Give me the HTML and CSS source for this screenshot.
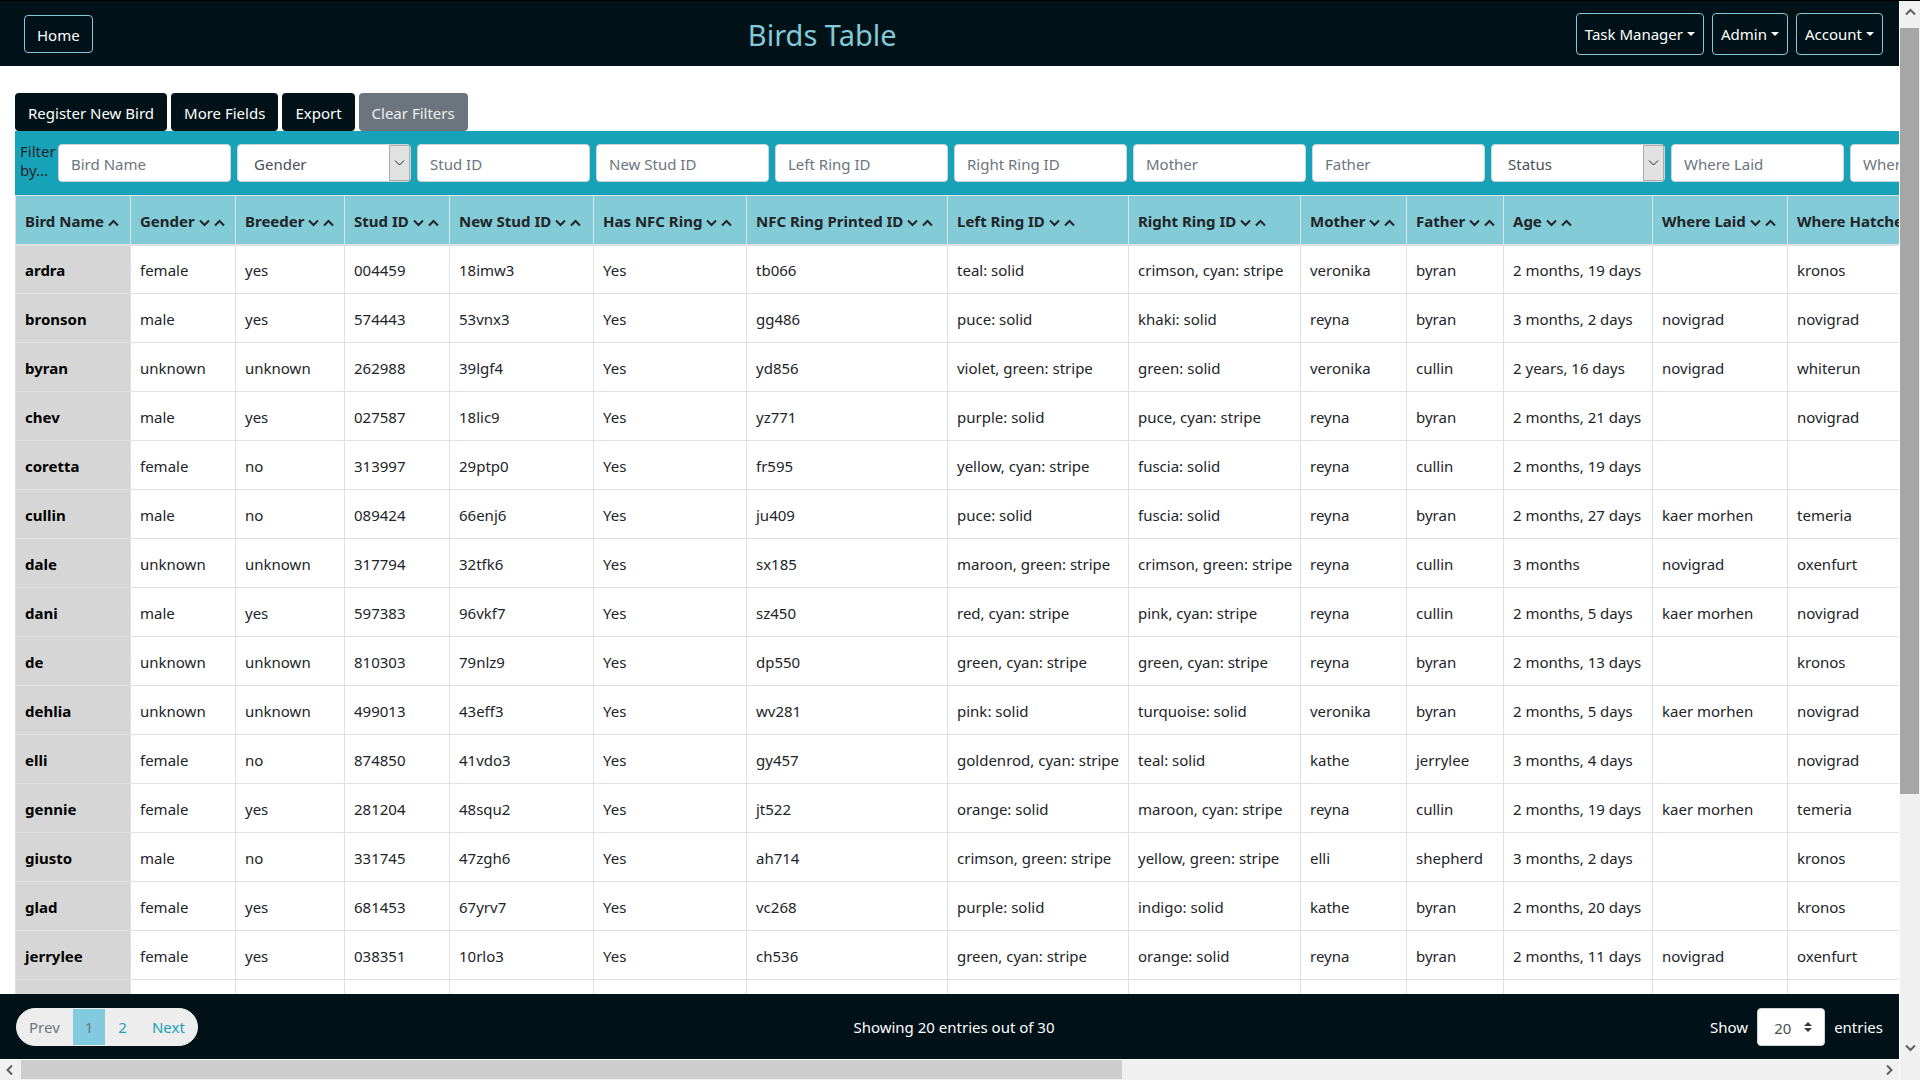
FILE: index.html
```html
<!DOCTYPE html>
<html lang="en">
<head>
<meta charset="utf-8">
<title>Birds Table</title>
<link rel="stylesheet" href="styles.css">
</head>
<body>
<svg class="defs" aria-hidden="true">
  <symbol id="down" viewBox="0 0 11 8"><path d="M1 1.5 5.5 6 10 1.5"/></symbol>
  <symbol id="up" viewBox="0 0 11 8"><path d="M1 6.5 5.5 2 10 6.5"/></symbol>
</svg>
<div class="app">
  <header class="navbar">
    <button type="button" class="btn btn-dark btn-outline">Home</button>
    <h1 class="title">Birds Table</h1>
    <nav class="menus">
      <button type="button" class="menu">Task Manager<span class="caret"></span></button>
      <button type="button" class="menu">Admin<span class="caret"></span></button>
      <button type="button" class="menu">Account<span class="caret"></span></button>
    </nav>
  </header>

  <main class="main">
    <div class="toolbar">
      <button type="button" class="btn btn-dark">Register New Bird</button>
      <button type="button" class="btn btn-dark">More Fields</button>
      <button type="button" class="btn btn-dark">Export</button>
      <button type="button" class="btn btn-gray">Clear Filters</button>
    </div>
    <form class="filters">
      <span class="filters-label">Filter by...</span>
      <input class="field" type="text" placeholder="Bird Name" aria-label="Bird Name">
      <span class="picker"><select class="field" aria-label="Gender"><option>Gender</option></select><span class="picker-btn"><svg><use href="#down"/></svg></span></span>
      <input class="field" type="text" placeholder="Stud ID" aria-label="Stud ID">
      <input class="field" type="text" placeholder="New Stud ID" aria-label="New Stud ID">
      <input class="field" type="text" placeholder="Left Ring ID" aria-label="Left Ring ID">
      <input class="field" type="text" placeholder="Right Ring ID" aria-label="Right Ring ID">
      <input class="field" type="text" placeholder="Mother" aria-label="Mother">
      <input class="field" type="text" placeholder="Father" aria-label="Father">
      <span class="picker"><select class="field" aria-label="Status"><option>Status</option></select><span class="picker-btn"><svg><use href="#down"/></svg></span></span>
      <input class="field" type="text" placeholder="Where Laid" aria-label="Where Laid">
      <input class="field" type="text" placeholder="Where Hatched" aria-label="Where Hatched">
    </form>
    <table class="birds">
      <colgroup>
        <col class="c-name"><col class="c-gender"><col class="c-breeder"><col class="c-stud"><col class="c-newstud"><col class="c-nfc"><col class="c-printed"><col class="c-left"><col class="c-right"><col class="c-mother"><col class="c-father"><col class="c-age"><col class="c-laid"><col class="c-hatched">
      </colgroup>
      <thead>
        <tr>
          <th scope="col">Bird Name<button type="button" class="sort" aria-label="Ascending"><svg><use href="#up"/></svg></button></th>
          <th scope="col">Gender<button type="button" class="sort" aria-label="Descending"><svg><use href="#down"/></svg></button><button type="button" class="sort" aria-label="Ascending"><svg><use href="#up"/></svg></button></th>
          <th scope="col">Breeder<button type="button" class="sort" aria-label="Descending"><svg><use href="#down"/></svg></button><button type="button" class="sort" aria-label="Ascending"><svg><use href="#up"/></svg></button></th>
          <th scope="col">Stud ID<button type="button" class="sort" aria-label="Descending"><svg><use href="#down"/></svg></button><button type="button" class="sort" aria-label="Ascending"><svg><use href="#up"/></svg></button></th>
          <th scope="col">New Stud ID<button type="button" class="sort" aria-label="Descending"><svg><use href="#down"/></svg></button><button type="button" class="sort" aria-label="Ascending"><svg><use href="#up"/></svg></button></th>
          <th scope="col">Has NFC Ring<button type="button" class="sort" aria-label="Descending"><svg><use href="#down"/></svg></button><button type="button" class="sort" aria-label="Ascending"><svg><use href="#up"/></svg></button></th>
          <th scope="col">NFC Ring Printed ID<button type="button" class="sort" aria-label="Descending"><svg><use href="#down"/></svg></button><button type="button" class="sort" aria-label="Ascending"><svg><use href="#up"/></svg></button></th>
          <th scope="col">Left Ring ID<button type="button" class="sort" aria-label="Descending"><svg><use href="#down"/></svg></button><button type="button" class="sort" aria-label="Ascending"><svg><use href="#up"/></svg></button></th>
          <th scope="col">Right Ring ID<button type="button" class="sort" aria-label="Descending"><svg><use href="#down"/></svg></button><button type="button" class="sort" aria-label="Ascending"><svg><use href="#up"/></svg></button></th>
          <th scope="col">Mother<button type="button" class="sort" aria-label="Descending"><svg><use href="#down"/></svg></button><button type="button" class="sort" aria-label="Ascending"><svg><use href="#up"/></svg></button></th>
          <th scope="col">Father<button type="button" class="sort" aria-label="Descending"><svg><use href="#down"/></svg></button><button type="button" class="sort" aria-label="Ascending"><svg><use href="#up"/></svg></button></th>
          <th scope="col">Age<button type="button" class="sort" aria-label="Descending"><svg><use href="#down"/></svg></button><button type="button" class="sort" aria-label="Ascending"><svg><use href="#up"/></svg></button></th>
          <th scope="col">Where Laid<button type="button" class="sort" aria-label="Descending"><svg><use href="#down"/></svg></button><button type="button" class="sort" aria-label="Ascending"><svg><use href="#up"/></svg></button></th>
          <th scope="col">Where Hatched<button type="button" class="sort" aria-label="Descending"><svg><use href="#down"/></svg></button><button type="button" class="sort" aria-label="Ascending"><svg><use href="#up"/></svg></button></th>
        </tr>
      </thead>
      <tbody>
        <tr><th scope="row">ardra</th><td>female</td><td>yes</td><td>004459</td><td>18imw3</td><td>Yes</td><td>tb066</td><td>teal: solid</td><td>crimson, cyan: stripe</td><td>veronika</td><td>byran</td><td>2 months, 19 days</td><td></td><td>kronos</td></tr>
        <tr><th scope="row">bronson</th><td>male</td><td>yes</td><td>574443</td><td>53vnx3</td><td>Yes</td><td>gg486</td><td>puce: solid</td><td>khaki: solid</td><td>reyna</td><td>byran</td><td>3 months, 2 days</td><td>novigrad</td><td>novigrad</td></tr>
        <tr><th scope="row">byran</th><td>unknown</td><td>unknown</td><td>262988</td><td>39lgf4</td><td>Yes</td><td>yd856</td><td>violet, green: stripe</td><td>green: solid</td><td>veronika</td><td>cullin</td><td>2 years, 16 days</td><td>novigrad</td><td>whiterun</td></tr>
        <tr><th scope="row">chev</th><td>male</td><td>yes</td><td>027587</td><td>18lic9</td><td>Yes</td><td>yz771</td><td>purple: solid</td><td>puce, cyan: stripe</td><td>reyna</td><td>byran</td><td>2 months, 21 days</td><td></td><td>novigrad</td></tr>
        <tr><th scope="row">coretta</th><td>female</td><td>no</td><td>313997</td><td>29ptp0</td><td>Yes</td><td>fr595</td><td>yellow, cyan: stripe</td><td>fuscia: solid</td><td>reyna</td><td>cullin</td><td>2 months, 19 days</td><td></td><td></td></tr>
        <tr><th scope="row">cullin</th><td>male</td><td>no</td><td>089424</td><td>66enj6</td><td>Yes</td><td>ju409</td><td>puce: solid</td><td>fuscia: solid</td><td>reyna</td><td>byran</td><td>2 months, 27 days</td><td>kaer morhen</td><td>temeria</td></tr>
        <tr><th scope="row">dale</th><td>unknown</td><td>unknown</td><td>317794</td><td>32tfk6</td><td>Yes</td><td>sx185</td><td>maroon, green: stripe</td><td>crimson, green: stripe</td><td>reyna</td><td>cullin</td><td>3 months</td><td>novigrad</td><td>oxenfurt</td></tr>
        <tr><th scope="row">dani</th><td>male</td><td>yes</td><td>597383</td><td>96vkf7</td><td>Yes</td><td>sz450</td><td>red, cyan: stripe</td><td>pink, cyan: stripe</td><td>reyna</td><td>cullin</td><td>2 months, 5 days</td><td>kaer morhen</td><td>novigrad</td></tr>
        <tr><th scope="row">de</th><td>unknown</td><td>unknown</td><td>810303</td><td>79nlz9</td><td>Yes</td><td>dp550</td><td>green, cyan: stripe</td><td>green, cyan: stripe</td><td>reyna</td><td>byran</td><td>2 months, 13 days</td><td></td><td>kronos</td></tr>
        <tr><th scope="row">dehlia</th><td>unknown</td><td>unknown</td><td>499013</td><td>43eff3</td><td>Yes</td><td>wv281</td><td>pink: solid</td><td>turquoise: solid</td><td>veronika</td><td>byran</td><td>2 months, 5 days</td><td>kaer morhen</td><td>novigrad</td></tr>
        <tr><th scope="row">elli</th><td>female</td><td>no</td><td>874850</td><td>41vdo3</td><td>Yes</td><td>gy457</td><td>goldenrod, cyan: stripe</td><td>teal: solid</td><td>kathe</td><td>jerrylee</td><td>3 months, 4 days</td><td></td><td>novigrad</td></tr>
        <tr><th scope="row">gennie</th><td>female</td><td>yes</td><td>281204</td><td>48squ2</td><td>Yes</td><td>jt522</td><td>orange: solid</td><td>maroon, cyan: stripe</td><td>reyna</td><td>cullin</td><td>2 months, 19 days</td><td>kaer morhen</td><td>temeria</td></tr>
        <tr><th scope="row">giusto</th><td>male</td><td>no</td><td>331745</td><td>47zgh6</td><td>Yes</td><td>ah714</td><td>crimson, green: stripe</td><td>yellow, green: stripe</td><td>elli</td><td>shepherd</td><td>3 months, 2 days</td><td></td><td>kronos</td></tr>
        <tr><th scope="row">glad</th><td>female</td><td>yes</td><td>681453</td><td>67yrv7</td><td>Yes</td><td>vc268</td><td>purple: solid</td><td>indigo: solid</td><td>kathe</td><td>byran</td><td>2 months, 20 days</td><td></td><td>kronos</td></tr>
        <tr><th scope="row">jerrylee</th><td>female</td><td>yes</td><td>038351</td><td>10rlo3</td><td>Yes</td><td>ch536</td><td>green, cyan: stripe</td><td>orange: solid</td><td>reyna</td><td>byran</td><td>2 months, 11 days</td><td>novigrad</td><td>oxenfurt</td></tr>
        <tr><th scope="row"></th><td></td><td></td><td></td><td></td><td></td><td></td><td></td><td></td><td></td><td></td><td></td><td></td><td></td></tr>
      </tbody>
    </table>
  </main>

  <footer class="footer">
    <nav class="pages" aria-label="Pages">
      <button type="button" class="page" disabled>Prev</button>
      <button type="button" class="page page-current" disabled>1</button>
      <a class="page" href="#2">2</a>
      <a class="page" href="#next">Next</a>
    </nav>
    <p class="summary">Showing 20 entries out of 30</p>
    <label class="length">Show
      <span class="length-box"><select class="length-select"><option>20</option></select><svg class="length-arrows" viewBox="0 0 8 10"><path d="M0 4 4 0 8 4ZM0 6 4 10 8 6Z"/></svg></span>
      entries</label>
  </footer>

  <div class="vbar">
    <svg><use href="#up"/></svg>
    <div class="vtrack"><div class="vthumb"></div></div>
    <svg><use href="#down"/></svg>
  </div>
  <div class="hbar">
    <svg class="turn"><use href="#up"/></svg>
    <div class="htrack"><div class="hthumb"></div></div>
    <svg class="turn"><use href="#down"/></svg>
  </div>
  <div class="corner"></div>
</div>
</body>
</html>
```
FILE: styles.css
```css
* { box-sizing: border-box; }

body {
  margin: 0;
  background: #fff;
  color: #212529;
  font: 15px/24px "Noto Sans", "Open Sans", sans-serif;
}

button, input, select { font: inherit; margin: 0; }

.defs { display: block; width: 0; height: 0; }
svg { fill: none; stroke: currentColor; stroke-width: 2; }

.app {
  display: grid;
  grid-template: auto minmax(0, 1fr) auto auto / minmax(0, 1fr) auto;
  grid-template-areas: "nav vbar" "main vbar" "foot vbar" "hbar corner";
  height: 100vh;
  border-top: 1px solid #000;
}

/* Top bar */
.navbar {
  grid-area: nav;
  display: flex;
  align-items: center;
  height: 65px;
  padding: 0 16px 0 24px;
  background: #001117;
}
.title {
  flex: 1;
  margin: 0 24px 0 0;
  padding-top: 2px;
  color: #82cad8;
  font-size: 29px;
  font-weight: 400;
  line-height: 36px;
  text-align: center;
}
.menus { display: flex; gap: 8px; }
.menu {
  display: flex;
  align-items: center;
  gap: 4px;
  height: 42px;
  padding: 0 8px;
  border: 1px solid #82cad8;
  border-radius: 4px;
  background: none;
  color: #fff;
}
.caret {
  border: 4px solid transparent;
  border-top-color: #fff;
  border-bottom: 0;
}

.btn {
  height: 38px;
  padding: 2px 12px 0;
  border: 1px solid transparent;
  border-radius: 4px;
  color: #fff;
}
.btn-dark { background: #001117; }
.btn-gray { background: #6c757d; color: #eceef0; }
.btn-outline { border-color: #82cad8; }

/* Toolbar and filters */
.main {
  grid-area: main;
  padding: 27px 0 0 15px;
  overflow: hidden;
}
.toolbar { display: flex; gap: 4px; }
.filters {
  display: flex;
  align-items: center;
  gap: 6px;
  height: 64px;
  padding-left: 5px;
  background: #18a2b8;
  overflow: hidden;
}
.filters-label { flex: none; width: 32px; padding-bottom: 5px; line-height: 19px; }
.field {
  flex: none;
  width: 173px;
  height: 38px;
  padding: 2px 12px 0;
  border: 1px solid #ced4da;
  border-radius: 4px;
  background: #fff;
  color: #495057;
}
.field::placeholder { color: #6c757d; opacity: 1; }
.picker { position: relative; flex: none; }
.picker .field { display: block; width: 174px; padding: 2px 16px 0; appearance: none; }
.picker-btn {
  position: absolute;
  top: 1px;
  right: 1px;
  display: grid;
  place-items: center;
  width: 21px;
  height: 36px;
  border: 1px solid #adadad;
  background: #e1e1e1;
  pointer-events: none;
}
.picker-btn svg { width: 11px; height: 8px; stroke-width: 1; }

/* Birds table */
.birds { width: 1973px; table-layout: fixed; border-collapse: collapse; }
.birds th, .birds td {
  height: 49px;
  padding: 2px 9px 0;
  border: 1px solid #dee2e6;
  text-align: left;
  white-space: nowrap;
}
.birds thead th { border-bottom-width: 2px; background: #83cbd7; }
.birds tbody th { background: #d6d6d6; color: #000; }
.sort {
  width: 11px;
  height: 8px;
  margin-left: 4px;
  padding: 0;
  border: 0;
  background: none;
  color: inherit;
}
.sort svg { display: block; width: 11px; height: 8px; }
.c-name { width: 115px; }
.c-gender { width: 105px; }
.c-breeder { width: 109px; }
.c-stud { width: 105px; }
.c-newstud { width: 144px; }
.c-nfc { width: 153px; }
.c-printed { width: 201px; }
.c-left { width: 181px; }
.c-right { width: 172px; }
.c-mother { width: 106px; }
.c-father { width: 97px; }
.c-age { width: 149px; }
.c-laid { width: 135px; }

/* Bottom bar */
.footer {
  grid-area: foot;
  display: flex;
  align-items: center;
  justify-content: space-between;
  height: 65px;
  padding: 0 16px;
  background: #001117;
  color: #fff;
}
.pages {
  display: flex;
  gap: 1px;
  height: 38px;
  border: 1px solid #ededed;
  border-radius: 19px;
  background: #ededed;
  overflow: hidden;
}
.page {
  padding: 0 12px;
  border: 0;
  background: none;
  color: #17a2b8;
  line-height: 36px;
  text-decoration: none;
}
.page:disabled { color: #6c757d; }
.page-current { background: #82cade; }
.summary { margin: 0; }
.length { display: flex; align-items: center; gap: 9px; }
.length-box { position: relative; }
.length-select {
  display: block;
  width: 68px;
  height: 38px;
  padding: 2px 16px 0;
  border: 1px solid #ced4da;
  border-radius: 4px;
  background: #fff;
  color: #495057;
  appearance: none;
}
.length-arrows {
  position: absolute;
  top: 14px;
  right: 13px;
  width: 8px;
  height: 10px;
  fill: #343a40;
  stroke: none;
  pointer-events: none;
}

/* Scroll bars */
.vbar, .hbar {
  display: flex;
  align-items: center;
  background: #f0f0f0;
  color: #606060;
}
.vbar {
  grid-area: vbar;
  flex-direction: column;
  gap: 8px;
  width: 21px;
  padding: 7px 0;
  border-left: 1px solid #fff;
}
.vbar svg, .hbar svg { flex: none; width: 11px; height: 8px; }
.vtrack { flex: 1; width: 100%; padding: 4px 1px 0 0; }
.vthumb { height: 76%; background: #a6a6a6; }
.hbar {
  grid-area: hbar;
  gap: 6px;
  height: 21px;
  padding: 0 4px;
  border-top: 1px solid #fff;
}
.turn { transform: rotate(-90deg); }
.htrack { flex: 1; height: 100%; padding-bottom: 1px; }
.hthumb { width: 59.3%; height: 100%; background: #cdcdcd; }
.corner { grid-area: corner; border-left: 1px solid #fff; background: #f0f0f0; }
```
